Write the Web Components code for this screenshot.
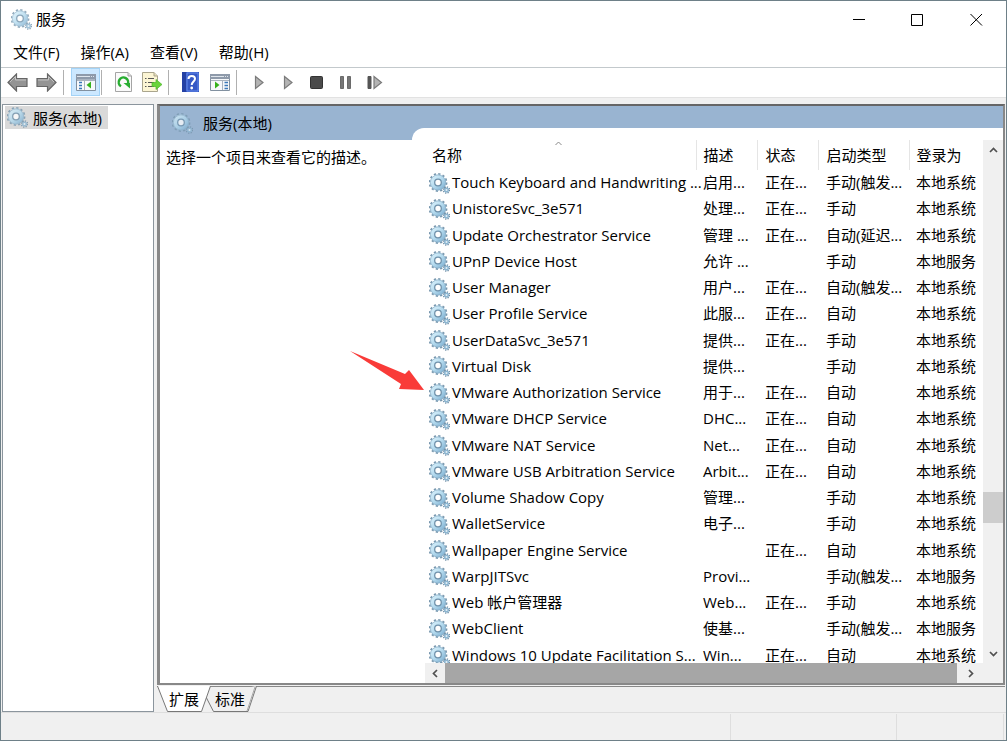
<!DOCTYPE html>
<html lang="zh-CN">
<head>
<meta charset="utf-8">
<title>服务</title>
<style>
html, body { height: 100%; margin: 0; }
body { font: 15px/20px "Open Sans", "Noto Sans CJK SC", sans-serif; color: #000; background: #f0f0f0; }
</style>
</head>
<body>
<services-window></services-window>
<script>
const define = (name, html, setup) => customElements.define(name, class extends HTMLElement {
  constructor() {
    super();
    this.attachShadow({ mode: 'open' }).innerHTML = html;
  }
  connectedCallback() { if (setup) setup(this, this.shadowRoot); }
});

define('gear-icon', `
<style>
:host { display: inline-block; width: 21px; height: 21px; flex: none; }
:host([soft]) { opacity: .8; }
svg { display: block; }
</style>
<svg width="21" height="21" viewBox="0 0 21 21" aria-hidden="true">
  <defs><linearGradient id="g" x1="0" y1="0" x2="1" y2="1"><stop offset="0" stop-color="#d3edf9"/><stop offset=".5" stop-color="#b4daee"/><stop offset="1" stop-color="#86b6d6"/></linearGradient></defs>
  <circle cx="9" cy="9.500" r="8.4" fill="none" stroke="#7796ad" stroke-width="2" stroke-dasharray="2.200 2.198"/>
  <circle cx="9" cy="9.500" r="5.500" fill="none" stroke="url(#g)" stroke-width="4.800"/>
  <circle cx="9" cy="9.500" r="7.600" fill="none" stroke="#88acc4" stroke-width=".7"/>
  <circle cx="9" cy="9.500" r="3.300" fill="#fff" stroke="#6f91aa" stroke-width="1.300"/>
  <circle cx="17.500" cy="17" r="3" fill="none" stroke="#718fa6" stroke-width="1.600" stroke-dasharray="1.200 1.156"/>
  <circle cx="17.500" cy="17" r="1.800" fill="#e3eff5" stroke="#8db6d1" stroke-width="1.500"/>
</svg>`);

define('title-bar', `
<style>
:host { display: flex; height: 37px; align-items: center; padding-left: 10px; background: #fff; }
h1 { flex: 1; margin: 0 0 0 4px; padding-bottom: 2px; font: inherit; }
button { width: 59px; height: 37px; padding: 0; border: 0; background: none; }
svg { display: block; margin: auto; }
</style>
<gear-icon soft></gear-icon><h1><slot></slot></h1>
<button aria-label="最小化"><svg width="13" height="13"><path d="M1 6.5H13" stroke="#000"/></svg></button>
<button aria-label="最大化"><svg width="13" height="13"><path d="M.5 1.500H11.500V12.500H.5Z" fill="none" stroke="#000"/></svg></button>
<button aria-label="关闭"><svg width="13" height="13"><path d="M.5 1L12 12.500M12 1L.5 12.500" stroke="#000"/></svg></button>`);

define('menu-bar', `
<style>
:host { display: flex; gap: 21px; height: 29px; align-items: center; padding-left: 12px; background: #fff; border-bottom: 1px solid #c3c9cc; }
button { font: inherit; color: inherit; border: 0; padding: 0 0 2px; background: none; }
</style>
<button>文件(F)</button><button>操作(A)</button><button>查看(V)</button><button>帮助(H)</button>`);

define('tool-button', `
<style>
:host { display: block; flex: none; }
button { display: flex; align-items: center; justify-content: center; width: 29px; height: 28px; padding: 0; border: 1px solid transparent; background: none; }
:host([active]) button { background: #cce8ff; border-color: #a3d3f7; }
</style>
<button><slot></slot></button>`, (el, root) => root.querySelector('button').setAttribute('aria-label', el.getAttribute('name')));

const play = '<svg width="11" height="15"><path d="M2.500 1.500L10 7.500L2.500 13.500Z" fill="#b4b4b4" stroke="#7b7b7b" stroke-width="1.2"/></svg>';
define('tool-bar', `
<style>
:host { display: flex; height: 29px; padding-left: 2px; background: #fff; border-bottom: 1px solid #e2e2e2; }
i { width: 1px; height: 25px; margin: 2px 7px 2px 2px; background: #b0b0b0; }
i.tight { margin-left: 1px; }
svg { display: block; }
</style>
<tool-button name="后退"><svg width="21" height="19"><path d="M1 9.5L9.500 1V5.500H20V13.500H9.500V18Z" fill="#949494" stroke="#666" stroke-width="1.2"/><path d="M3 9L8.500 3.500V7H19" fill="none" stroke="#c2c2c2"/></svg></tool-button>
<tool-button name="前进"><svg width="21" height="19"><path d="M20 9.500L11.500 1V5.500H1V13.500H11.500V18Z" fill="#949494" stroke="#666" stroke-width="1.2"/><path d="M2 7H12.500V3.500L18 9" fill="none" stroke="#c2c2c2"/></svg></tool-button>
<i></i>
<tool-button active name="显示/隐藏控制台树"><svg width="20" height="18"><path d="M.5 1.500H19.500V17.500H.5Z" fill="#f7f9fb" stroke="#8291a0"/><path d="M0 1H20V6H0Z" fill="#8e9aaa"/><path d="M1 3.500H14M15 3.500H16M17 3.500H18" stroke="#dfe5ec"/><path d="M1 6.500H19M8.500 7V17M1 7.500H19" stroke="#aab4c0"/><path d="M3 9.500H6M3 12.500H6M3 15.500H6" stroke="#3a78b8" stroke-width="1.3"/><path d="M15 8.500V15.500L10.500 12Z" fill="#36b21c"/></svg></tool-button>
<i class="tight"></i>
<tool-button name="刷新"><svg width="17" height="20"><path d="M.5.5H13L16.500 4V19.500H.5Z" fill="#fafafa" stroke="#a5a5a5"/><path d="M13 .5V4H16.500" fill="#ddd" stroke="#a5a5a5"/><path d="M6 14.200A4.700 4.700 0 1 1 12.500 12.500" fill="none" stroke="#28ad31" stroke-width="2.500"/><path d="M8.500 11H15V16.500Z" fill="#28ad31"/></svg></tool-button>
<tool-button name="导出列表"><svg width="21" height="20"><path d="M.5.5H12L15.500 4V19.500H.5Z" fill="#fcf5d4" stroke="#aaa58d"/><path d="M12 .5V4H15.500" fill="#e8dfb9" stroke="#aaa58d"/><path d="M3 6.500H4.500M6 6.500H12M3 10.500H4.500M6 10.500H12M3 14.500H4.500M6 14.500H12" stroke="#555"/><path d="M10 10.500H14V7.500L20 12.500L14 17.500V14.500H10Z" fill="#69d43a" stroke="#4cb52a" stroke-width=".7"/></svg></tool-button>
<i class="tight"></i>
<tool-button name="帮助"><svg width="17" height="20"><path d="M0 0H17V20H0Z" fill="#3558c5"/><path d="M0 0H4V20H0Z" fill="#2440a4"/><path d="M5 1H16V19H5Z" fill="none" stroke="#668bea"/><path d="M6.500 7C6.500 2.800 13 3 13 6.800C13 9.500 9.700 9.500 9.700 13" fill="none" stroke="#fff" stroke-width="2"/><circle cx="9.700" cy="16" r="1.400" fill="#fff"/></svg></tool-button>
<tool-button name="显示/隐藏操作窗格"><svg width="20" height="18"><path d="M.5 1.500H19.500V17.500H.5Z" fill="#f7f9fb" stroke="#8291a0"/><path d="M0 1H20V6H0Z" fill="#8e9aaa"/><path d="M1 3.500H14M15 3.500H16M17 3.500H18" stroke="#dfe5ec"/><path d="M1 7.500H19M12.500 7V17" stroke="#aab4c0"/><path d="M14.500 9.500H18M14.500 12.500H18M14.500 15.500H18" stroke="#3a78b8" stroke-width="1.300"/><path d="M5 8.500V15.500L9.500 12Z" fill="#36b21c"/></svg></tool-button>
<i></i>
<tool-button name="启动服务">${play}</tool-button>
<tool-button name="继续">${play}</tool-button>
<tool-button name="停止服务"><svg width="13" height="13"><rect x=".5" y=".5" width="12" height="12" rx="1" fill="#4b4b4b" stroke="#333"/></svg></tool-button>
<tool-button name="暂停服务"><svg width="12" height="13"><path d="M.5 .5H3.500V12.500H.5ZM7.500 .5H10.500V12.500H7.500Z" fill="#777" stroke="#6b6b6b"/></svg></tool-button>
<tool-button name="重启动服务"><svg width="16" height="15"><path d="M1 1.500H4V13.500H1Z" fill="#555" stroke="#555"/><path d="M7 1.500L14.500 7.500L7 13.500Z" fill="#b4b4b4" stroke="#7b7b7b" stroke-width="1.200"/></svg></tool-button>`);

define('console-tree', `
<style>
:host { display: block; box-sizing: border-box; width: 152px; flex: none; padding: 1px 2px; background: #fff; border: 1px solid #8b959d; }
button { display: flex; align-items: center; gap: 5px; height: 23px; padding: 0 6px 0 2px; border: 0; background: #d9d9d9; font: inherit; color: inherit; }
</style>
<button><gear-icon soft></gear-icon><span><slot></slot></span></button>`);

const rows = `Touch Keyboard and Handwriting ...|启用...|正在...|手动(触发...|本地系统
UnistoreSvc_3e571|处理...|正在...|手动|本地系统
Update Orchestrator Service|管理 ...|正在...|自动(延迟...|本地系统
UPnP Device Host|允许 ...||手动|本地服务
User Manager|用户...|正在...|自动(触发...|本地系统
User Profile Service|此服...|正在...|自动|本地系统
UserDataSvc_3e571|提供...|正在...|手动|本地系统
Virtual Disk|提供...||手动|本地系统
VMware Authorization Service|用于...|正在...|自动|本地系统
VMware DHCP Service|DHC...|正在...|自动|本地系统
VMware NAT Service|Net...|正在...|自动|本地系统
VMware USB Arbitration Service|Arbit...|正在...|自动|本地系统
Volume Shadow Copy|管理...||手动|本地系统
WalletService|电子...||手动|本地系统
Wallpaper Engine Service||正在...|自动|本地系统
WarpJITSvc|Provi...||手动(触发...|本地服务
Web 帐户管理器|Web...|正在...|手动|本地系统
WebClient|使基...||手动(触发...|本地服务
Windows 10 Update Facilitation S...|Win...|正在...|自动|本地系统`.split('\n').map(r => r.split('|'));

define('service-table', `
<style>
:host { display: block; overflow-x: visible; overflow-y: clip; min-height: 0; }
table { width: 100%; height: calc(100% + 6px); border-collapse: collapse; table-layout: fixed; }
th, td { box-sizing: border-box; padding: 0 0 0 7px; font-weight: normal; text-align: left; white-space: nowrap; }
th { position: relative; height: 30px; border-right: 1px solid #e5e5e5; }
th:last-child { border-right: 0; }
th svg { position: absolute; top: 1px; left: 48%; }
th.state, td.state { padding-left: 8px; }
td { position: relative; height: 26px; padding-bottom: 2px; }
td.name { padding: 0 0 0 4px; }
.item { display: flex; align-items: center; gap: 2px; }
.item span { padding-bottom: 2px; }
.pointer { position: absolute; right: 100%; bottom: 15px; }
.d, .state { width: 61px; } th.type { width: 91px; } .logon { width: 74px; }
</style>
<table><thead><tr><th>名称<svg width="7" height="5"><path d="M.5 4L3.500 1L6.500 4" fill="none" stroke="#888"/></svg></th><th class="d">描述</th><th class="state">状态</th><th class="type state">启动类型</th><th class="logon">登录为</th></tr></thead><tbody>
${rows.map(r => `<tr><td class="name">${r[0].startsWith('VMware Auth') ? '<svg class="pointer" width="75" height="40" aria-hidden="true"><path d="M0 0L55 23L59 19L74 39L49 38L51 33Z" fill="#f93b38"/></svg>' : ''}<div class="item"><gear-icon></gear-icon><span>${r[0]}</span></div></td><td>${r[1]}</td><td class="state">${r[2]}</td><td class="state">${r[3]}</td><td>${r[4]}</td></tr>`).join('')}
</tbody></table>`);

define('scroll-bar', `
<style>
:host { display: flex; background: #f0f0f0; }
:host([vertical]) { flex-direction: column; }
button { flex: none; width: 20px; height: 20px; padding: 0; border: 0; background: none; }
:host(:not([vertical])) button:last-child { width: 26px; }
svg { display: block; margin: auto; }
.track { flex: 1; display: flex; flex-direction: inherit; }
.thumb { flex: 1; background: #a6a6a6; }
:host([vertical]) .before { flex: 331; }
:host([vertical]) .thumb { flex: 31; background: #cdcdcd; }
:host([vertical]) .after { flex: 120; }
:host([vertical]) svg { transform: rotate(90deg); }
</style>
<button aria-label="向前滚动"><svg width="9" height="9"><path d="M6 1L2.500 4.500L6 8" fill="none" stroke="#505050" stroke-width="1.700"/></svg></button>
<div class="track"><div class="before"></div><div class="thumb"></div><div class="after"></div></div>
<button aria-label="向后滚动"><svg width="9" height="9"><path d="M3 1L6.500 4.500L3 8" fill="none" stroke="#505050" stroke-width="1.700"/></svg></button>`);

define('result-pane', `
<style>
:host { display: flex; flex: 1; min-height: 0; background: #99b4d1; border: 2px solid #888; border-top-color: #666; border-left-width: 3px; }
.detail { display: flex; flex-direction: column; width: 252px; flex: none; }
h2 { display: flex; align-items: center; gap: 10px; height: 34px; margin: 0; padding-left: 12px; font: inherit; }
h2 gear-icon { opacity: .75; }
p { flex: 1; margin: 0; padding: 7px 6px; background: #fff; }
.list { flex: 1; min-width: 0; display: flex; flex-direction: column; margin-top: 22px; padding: 12px 0 0 13px; background: #fff; border-top-left-radius: 12px; }
.grid { flex: 1; min-height: 0; display: grid; grid-template: minmax(0, 1fr) 20px / minmax(0, 1fr) 20px; }
.cross { grid-column: 1 / 3; display: flex; background: #f0f0f0; padding-right: 20px; }
.cross scroll-bar { flex: 1; }
</style>
<div class="detail"><h2><gear-icon></gear-icon>服务(本地)</h2><p>选择一个项目来查看它的描述。</p></div>
<div class="list"><div class="grid"><service-table></service-table><scroll-bar vertical></scroll-bar><div class="cross"><scroll-bar></scroll-bar></div></div></div>`);

define('view-tabs', `
<style>
:host { display: flex; height: 26px; border-top: 1px solid #888; box-sizing: border-box; margin-top: 1px; }
button { position: relative; z-index: 0; width: 46px; height: 25px; margin-left: -1px; padding: 0 6px 2px 0; border: 0; background: none; font: inherit; color: inherit; }
button:first-of-type { width: 54px; margin-left: 0; padding-right: 0; z-index: 1; }
button:last-of-type svg { left: -8px; }
svg { position: absolute; left: 0; top: -1px; z-index: -1; }
</style>
<button><svg width="56" height="27"><path d="M.5 0L10.500 25.500H44.500L53.500 0" fill="#fff" stroke="#777"/></svg>扩展</button><button><svg width="56" height="27"><path d="M4 11L11.500 25.500H46L54.500 0" fill="#f0f0f0" stroke="#777"/><path d="M45 25L53 1" stroke="#aaa"/></svg>标准</button>`);

define('status-bar', `
<style>
:host { display: grid; grid-template-columns: 1fr 166px 107px; height: 28px; padding: 1px 2px 0 0; border-top: 1px solid #dedede; box-sizing: border-box; background: #f0f0f0; }
span { border-right: 1px solid #dedede; }
</style><span></span><span></span><span></span>`);

define('services-window', `
<style>
:host { display: flex; flex-direction: column; box-sizing: border-box; height: 100vh; border: 1px solid #6e8088; background: #f0f0f0; }
main { flex: 1; min-height: 0; display: flex; gap: 3px; padding: 6px 1px 0; }
.right { flex: 1; min-width: 0; display: flex; flex-direction: column; }
</style>
<title-bar>服务</title-bar>
<menu-bar></menu-bar>
<tool-bar></tool-bar>
<main><console-tree>服务(本地)</console-tree><div class="right"><result-pane></result-pane><view-tabs></view-tabs></div></main>
<status-bar></status-bar>`);
</script>
</body>
</html>
